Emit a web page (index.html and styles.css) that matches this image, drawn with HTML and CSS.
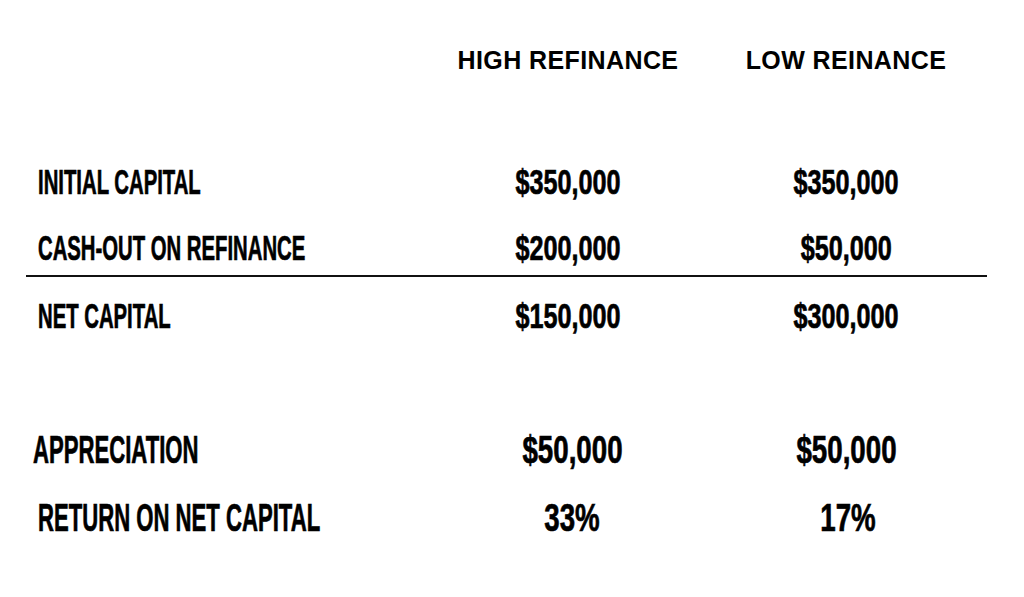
FILE: index.html
```html
<!DOCTYPE html>
<html>
<head>
<meta charset="utf-8">
<link rel="stylesheet" href="styles.css">
</head>
<body>
<div class="sheet">
  <div class="head">
    <div></div>
    <div class="hcell">HIGH REFINANCE</div>
    <div class="hcell">LOW REINANCE</div>
  </div>

  <div class="row r1">
    <div class="label"><span>INITIAL CAPITAL</span></div>
    <div class="val"><span>$350,000</span></div>
    <div class="val"><span>$350,000</span></div>
  </div>
  <div class="row r2">
    <div class="label"><span>CASH-OUT ON REFINANCE</span></div>
    <div class="val"><span>$200,000</span></div>
    <div class="val"><span>$50,000</span></div>
  </div>
  <div class="rule"></div>
  <div class="row r3">
    <div class="label"><span>NET CAPITAL</span></div>
    <div class="val"><span>$150,000</span></div>
    <div class="val"><span>$300,000</span></div>
  </div>

  <div class="row big r4">
    <div class="label shift"><span>APPRECIATION</span></div>
    <div class="val nudge"><span>$50,000</span></div>
    <div class="val"><span>$50,000</span></div>
  </div>
  <div class="row big r5">
    <div class="label"><span>RETURN ON NET CAPITAL</span></div>
    <div class="val nudge"><span>33%</span></div>
    <div class="val nudge-sm"><span>17%</span></div>
  </div>
</div>
</body>
</html>
```

FILE: styles.css
```css
html, body {
  margin: 0;
  padding: 0;
  background: #ffffff;
}

body {
  width: 1024px;
  height: 597px;
  overflow: hidden;
  color: #000;
  font-family: "Liberation Sans", Arial, sans-serif;
}

.sheet {
  padding-top: 48px;
}

.head,
.row {
  display: grid;
  grid-template-columns: 429px 278px 278px;
}

.hcell {
  text-align: center;
  font-weight: 700;
  font-size: 25px;
  line-height: 25px;
  letter-spacing: 0.4px;
  white-space: nowrap;
}

.row {
  font-weight: 700;
  font-size: 35px;
  line-height: 35px;
  white-space: nowrap;
  -webkit-text-stroke: 0.7px #000;
}

.row.big {
  font-size: 39px;
  line-height: 39px;
}

.label {
  padding-left: 38px;
}

.label.shift {
  padding-left: 33px;
}

.label span {
  display: inline-block;
  transform: scaleX(0.58);
  transform-origin: left center;
}

.big .label span {
  transform: scaleX(0.567);
}

.val {
  text-align: center;
}

.val.nudge {
  padding-left: 9px;
}

.val.nudge-sm {
  padding-left: 4px;
}

.val span {
  display: inline-block;
  transform: scaleX(0.72);
  transform-origin: center center;
}

.big .val span {
  transform: scaleX(0.71);
}

.r1 { margin-top: 91px; }
.r2 { margin-top: 31px; }

.rule {
  margin: 10px 0 0 26px;
  width: 961px;
  height: 2px;
  background: #111;
}

.r3 { margin-top: 21px; }
.r4 { margin-top: 97px; }
.r5 { margin-top: 29px; }
```
